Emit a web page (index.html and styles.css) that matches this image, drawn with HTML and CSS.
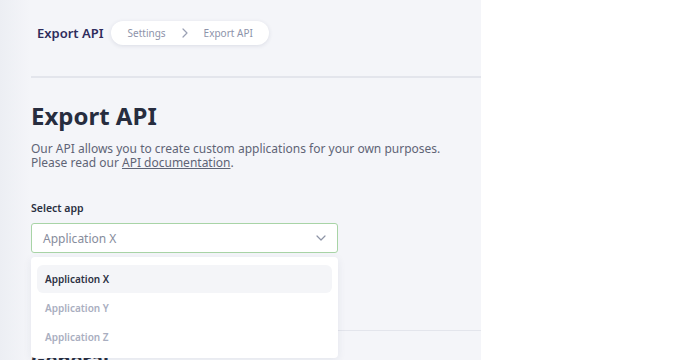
FILE: index.html
```html
<!DOCTYPE html>
<html lang="en">
<head>
<meta charset="UTF-8">
<meta name="viewport" content="width=device-width, initial-scale=1.0">
<title>Export API</title>
<link rel="stylesheet" href="styles.css">
</head>
<body>
<div class="panel">
    <div class="topbar">
        <span class="page-name">Export API</span>
        <nav class="crumbs">
            <span>Settings</span>
            <svg class="crumb-sep" width="8" height="10" viewBox="0 0 8 10"><path d="M2 1l4 4-4 4" fill="none" stroke="#9aa0b4" stroke-width="1.2" stroke-linecap="round" stroke-linejoin="round"/></svg>
            <span>Export API</span>
        </nav>
    </div>
    <div class="content">
        <h1>Export API</h1>
        <p class="intro">Our API allows you to create custom applications for your own purposes.<br>Please read our <a href="#">API documentation</a>.</p>

        <label class="field-label">Select app</label>
        <div class="select-wrap">
            <div class="select">
                <span>Application X</span>
                <svg width="10" height="6" viewBox="0 0 10 6"><path d="M1 1l4 4 4-4" fill="none" stroke="#8e94a6" stroke-width="1.2" stroke-linecap="round" stroke-linejoin="round"/></svg>
            </div>
            <ul class="menu">
                <li class="active">Application X</li>
                <li>Application Y</li>
                <li>Application Z</li>
            </ul>
        </div>

        <div class="section">
            <h2>General</h2>
        </div>
    </div>
</div>
</body>
</html>
```

FILE: styles.css
```css
body {
    margin: 0;
    font-family: "Noto Sans", Arial, sans-serif;
    background-color: #fff;
}
.panel {
    width: 481px;
    height: 360px;
    overflow: hidden;
    background: linear-gradient(to right, #eceef3 0px, #f4f5f9 30px, #f4f5f9 100%);
}
.topbar {
    display: flex;
    align-items: center;
    height: 78px;
    margin-left: 31px;
    padding-left: 6px;
    border-bottom: 2px solid #e3e5ec;
    box-sizing: border-box;
}
.page-name {
    font-size: 13px;
    font-weight: 600;
    color: #2e2c5c;
    margin-right: 7px;
    margin-top: -10px;
}
.crumbs {
    display: flex;
    align-items: center;
    gap: 15px;
    height: 24px;
    padding: 0 16px 0 17px;
    margin-top: -10px;
    background-color: #fff;
    border-radius: 12px;
    box-shadow: 0 1px 4px rgba(40, 50, 90, 0.12);
    font-size: 10px;
    color: #8d93aa;
}
.content {
    padding-left: 31px;
}
h1 {
    margin: 22px 0 0;
    font-size: 24px;
    font-weight: 700;
    color: #272d3f;
    line-height: 32px;
}
.intro {
    margin: 10px 0 0;
    font-size: 12px;
    line-height: 14px;
    color: #5f6476;
}
.intro a {
    color: #5f6476;
}
.field-label {
    display: block;
    margin-top: 31px;
    font-size: 10.5px;
    font-weight: 600;
    color: #2a3042;
}
.select-wrap {
    position: relative;
    width: 307px;
    margin-top: 8px;
}
.select {
    display: flex;
    align-items: center;
    justify-content: space-between;
    height: 28px;
    padding: 0 11px;
    border: 1px solid #a8d4a6;
    border-radius: 3px;
    background-color: #fff;
    font-size: 12px;
    color: #878c9c;
}
.menu {
    position: absolute;
    top: 34px;
    left: 0;
    right: 0;
    margin: 0;
    padding: 8px 6px 6px;
    list-style: none;
    background-color: #fff;
    border-radius: 4px;
    box-shadow: 0 2px 8px rgba(40, 50, 90, 0.08);
    z-index: 2;
}
.menu li {
    height: 28px;
    line-height: 28px;
    padding: 0 8px;
    margin-bottom: 1px;
    border-radius: 6px;
    font-size: 10px;
    font-weight: 600;
    color: #a9aec0;
}
.menu li.active {
    background-color: #f4f5f8;
    color: #2c3143;
}
.section {
    margin-top: 77px;
    border-top: 1px solid #e3e5ec;
    padding-top: 15px;
}
h2 {
    margin: 0;
    font-size: 20px;
    font-weight: 700;
    color: #272d3f;
}
```
